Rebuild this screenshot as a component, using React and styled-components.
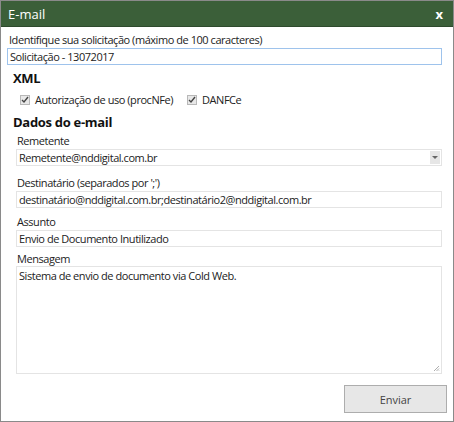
import React from "react";
import styled, { createGlobalStyle } from "styled-components";

const GlobalStyle = createGlobalStyle`
  body {
    margin: 0;
    background: #ffffff;
    font-family: "Open Sans", "Noto Sans", sans-serif;
  }
`;

const Window = styled.div`
  box-sizing: border-box;
  width: 454px;
  height: 422px;
  border: 1px solid #8a8a8a;
  background: #fff;
  display: flex;
  flex-direction: column;
`;

const TitleBar = styled.div`
  height: 25px;
  background: #3b5f39;
  border-bottom: 1px solid #2e4a2d;
  color: #fff;
  display: flex;
  align-items: center;
  justify-content: space-between;
  padding: 0 10px 0 7px;
  font-size: 13px;
`;

const Close = styled.span`
  font-weight: bold;
  font-size: 13px;
`;

const Body = styled.div`
  flex: 1;
  display: flex;
  flex-direction: column;
  padding: 5px 11px 0 6px;
  letter-spacing: -0.45px;
`;

const Label = styled.div`
  font-size: 11px;
  color: #222;
  line-height: 14px;
  margin-left: ${(p) => p.$indent || 0}px;
`;

const Field = styled.div`
  box-sizing: border-box;
  height: ${(p) => p.$h || 17}px;
  margin-left: ${(p) => p.$indent || 0}px;
  margin-top: ${(p) => p.$mt || 0}px;
  border: 1px solid ${(p) => (p.$focus ? "#9ec3ec" : "#e4e4e4")};
  font-size: 11px;
  color: #222;
  line-height: 14px;
  padding: ${(p) => (p.$multi ? "2px 2px" : "0 2px")};
  display: flex;
  align-items: ${(p) => (p.$multi ? "flex-start" : "center")};
  justify-content: space-between;
  position: relative;
`;

const Arrow = styled.div`
  width: 10px;
  height: 13px;
  background: #e6e6e6;
  display: flex;
  align-items: center;
  justify-content: center;
  margin-right: -1px;
  &::after {
    content: "";
    border-left: 3px solid transparent;
    border-right: 3px solid transparent;
    border-top: 3px solid #666;
  }
`;

const Grip = styled.svg`
  position: absolute;
  right: 1px;
  bottom: 1px;
`;

const Section = styled.div`
  font-size: 13px;
  font-weight: bold;
  color: #111;
  margin: ${(p) => p.$m};
  line-height: 17px;
  letter-spacing: -0.3px;
`;

const CheckRow = styled.div`
  display: flex;
  align-items: center;
  margin: 5px 0 0 13px;
  gap: 14px;
`;

const Check = styled.label`
  display: flex;
  align-items: center;
  gap: 5px;
  font-size: 11px;
  color: #222;
`;

const Box = styled.span`
  box-sizing: border-box;
  width: 10px;
  height: 10px;
  border: 1px solid #b8b8b8;
  background: #e8e8e8;
  display: flex;
  align-items: center;
  justify-content: center;
`;

const Group = styled.div`
  display: flex;
  flex-direction: column;
  gap: 1px;
  margin-top: ${(p) => p.$mt || 0}px;
`;

const Footer = styled.div`
  display: flex;
  justify-content: flex-end;
  margin: 11px -5px 0 0;
`;

const Button = styled.button`
  width: 103px;
  height: 28px;
  background: #e7e7e7;
  border: 1px solid #adadad;
  font-family: inherit;
  font-size: 11px;
  color: #444;
`;

const Tick = () => (
  <svg width="8" height="8" viewBox="0 0 8 8">
    <path d="M1 4 L3 6 L7 1" stroke="#444" strokeWidth="1.4" fill="none" />
  </svg>
);

export default function App() {
  return (
    <Window>
      <GlobalStyle />
      <TitleBar>
        <span>E-mail</span>
        <Close>x</Close>
      </TitleBar>
      <Body>
        <Group $mt={1}>
          <Label $indent={2}>Identifique sua solicitação (máximo de 100 caracteres)</Label>
          <Field $focus>Solicitação - 13072017</Field>
        </Group>
        <Section $m="5px 0 0 6px">XML</Section>
        <CheckRow>
          <Check>
            <Box><Tick /></Box>Autorização de uso (procNFe)
          </Check>
          <Check>
            <Box><Tick /></Box>DANFCe
          </Check>
        </CheckRow>
        <Section $m="7px 0 0 6px">Dados do e-mail</Section>
        <Group $mt={3}>
          <Label $indent={10}>Remetente</Label>
          <Field $indent={9}>
            Remetente@nddigital.com.br
            <Arrow />
          </Field>
        </Group>
        <Group $mt={10}>
          <Label $indent={10}>Destinatário (separados por ';')</Label>
          <Field $indent={9}>destinatário@nddigital.com.br;destinatário2@nddigital.com.br</Field>
        </Group>
        <Group $mt={7}>
          <Label $indent={10}>Assunto</Label>
          <Field $indent={9}>Envio de Documento Inutilizado</Field>
        </Group>
        <Group $mt={5}>
          <Label $indent={10}>Mensagem</Label>
          <Field $indent={9} $h={108} $mt={-1} $multi>
            Sistema de envio de documento via Cold Web.
            <Grip width="7" height="7" viewBox="0 0 7 7">
              <path d="M6 1 L1 6 M6 3.5 L3.5 6 M6 5.5 L5.5 6" stroke="#999" strokeWidth="0.8" />
            </Grip>
          </Field>
        </Group>
        <Footer>
          <Button>Enviar</Button>
        </Footer>
      </Body>
    </Window>
  );
}
